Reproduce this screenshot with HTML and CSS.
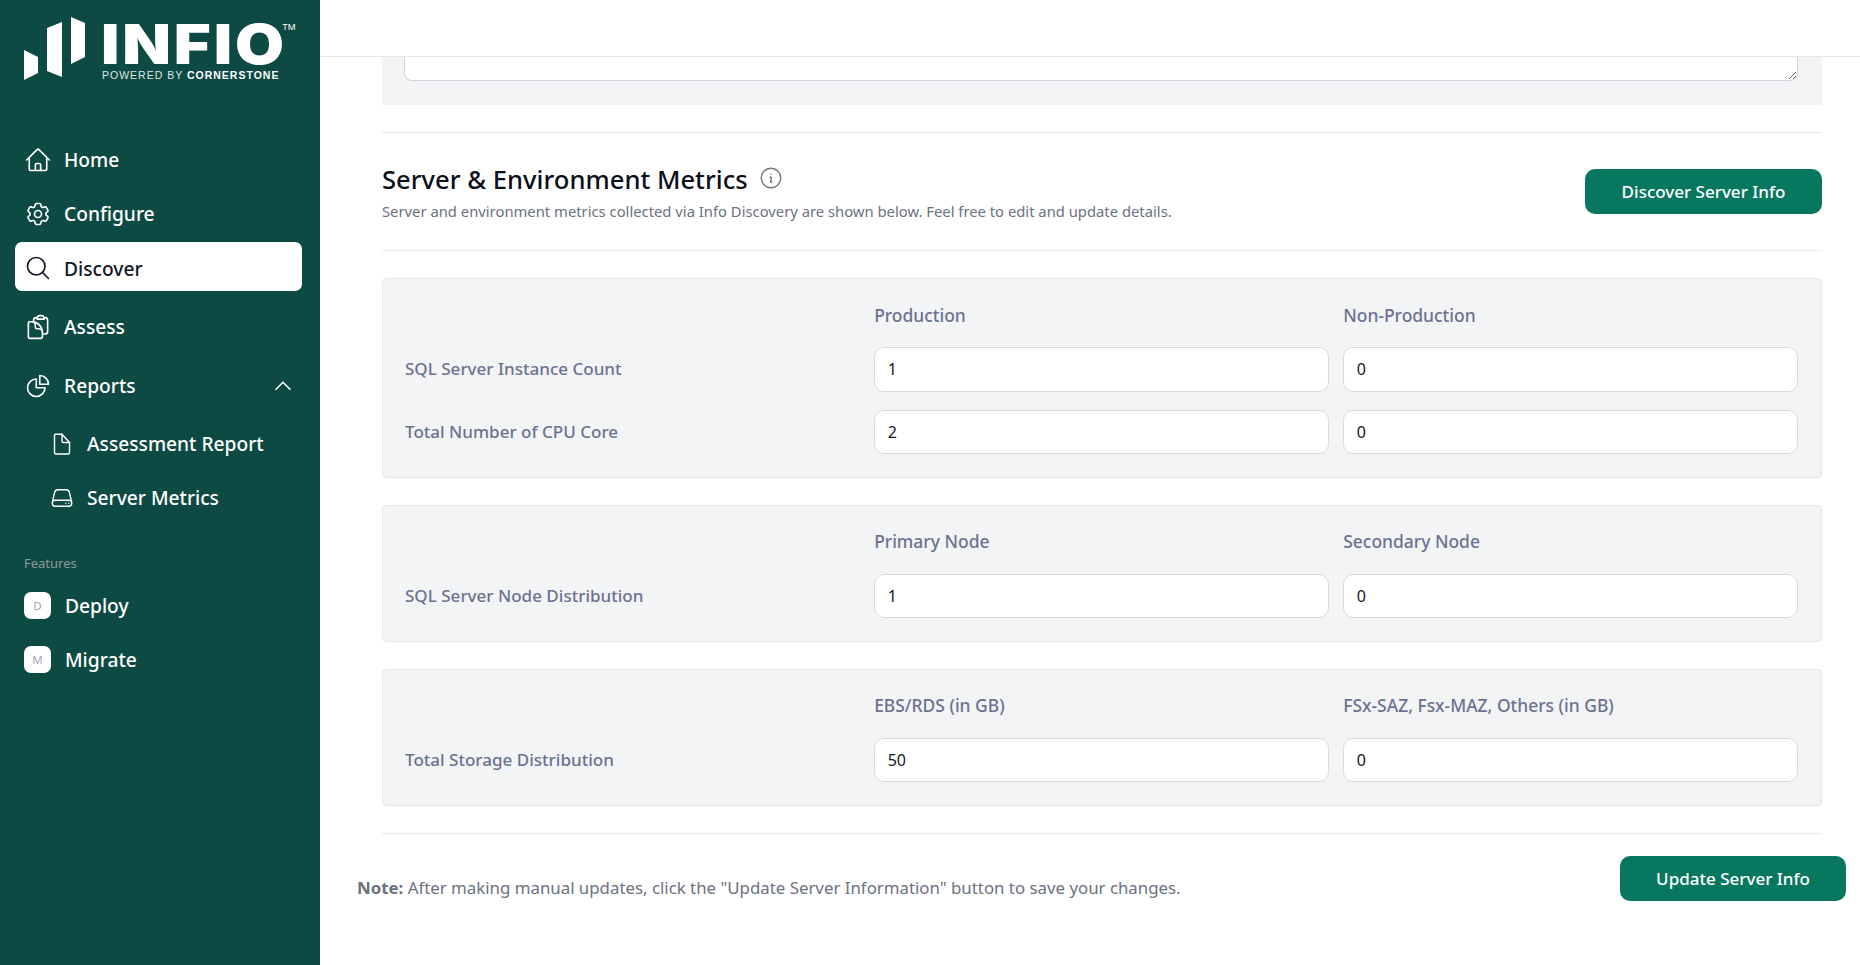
FILE: index.html
```html
<!DOCTYPE html>
<html>
<head>
  <meta charset="utf-8">
  <title>Server Metrics</title>
  <link rel="stylesheet" href="styles.css">
</head>
<body>
<aside class="sidebar">
  <div class="logo">
    <svg class="logo-mark" width="62" height="64" viewBox="24 17 62 64" fill="#fff">
      <polygon points="24,50 38,57 38,73 24,80"/>
      <polygon points="47,28 62,22 62,77 47,71"/>
      <polygon points="71,17 85,23 85,57 71,64"/>
    </svg>
    <div class="logo-text">
      <div class="logo-name">INFIO<sup class="logo-tm">TM</sup></div>
      <div class="logo-sub">POWERED BY <b>CORNERSTONE</b></div>
    </div>
  </div>

  <nav class="nav">
    <a class="nav-item">
      <svg class="nav-icon" viewBox="0 0 24 24"><path d="M2.25 12l8.954-8.955c.44-.439 1.152-.439 1.591 0L21.75 12M4.5 9.75v10.125c0 .621.504 1.125 1.125 1.125H9.75v-4.875c0-.621.504-1.125 1.125-1.125h2.25c.621 0 1.125.504 1.125 1.125V21h4.125c.621 0 1.125-.504 1.125-1.125V9.75M8.25 21h8.25"/></svg>
      Home
    </a>
    <a class="nav-item nav-before-active">
      <svg class="nav-icon" viewBox="0 0 24 24"><path d="M9.594 3.94c.09-.542.56-.94 1.11-.94h2.593c.55 0 1.02.398 1.11.94l.213 1.281c.063.374.313.686.645.87.074.04.147.083.22.127.324.196.72.257 1.075.124l1.217-.456a1.125 1.125 0 011.37.49l1.296 2.247a1.125 1.125 0 01-.26 1.431l-1.003.827c-.293.24-.438.613-.431.992a6.759 6.759 0 010 .255c-.007.378.138.75.43.99l1.005.828c.424.35.534.954.26 1.43l-1.298 2.247a1.125 1.125 0 01-1.369.491l-1.217-.456c-.355-.133-.75-.072-1.076.124a6.57 6.57 0 01-.22.128c-.331.183-.581.495-.644.869l-.213 1.28c-.09.543-.56.941-1.11.941h-2.594c-.55 0-1.02-.398-1.11-.94l-.213-1.281c-.062-.374-.312-.686-.644-.87a6.52 6.52 0 01-.22-.127c-.325-.196-.72-.257-1.076-.124l-1.217.456a1.125 1.125 0 01-1.369-.49l-1.297-2.247a1.125 1.125 0 01.26-1.431l1.004-.827c.292-.24.437-.613.43-.992a6.932 6.932 0 010-.255c.007-.378-.138-.75-.43-.99l-1.004-.828a1.125 1.125 0 01-.26-1.43l1.297-2.247a1.125 1.125 0 011.37-.491l1.216.456c.356.133.751.072 1.076-.124.072-.044.146-.087.22-.128.332-.183.582-.495.644-.869l.214-1.281z"/><path d="M15 12a3 3 0 11-6 0 3 3 0 016 0z"/></svg>
      Configure
    </a>
    <a class="nav-item nav-active">
      <svg class="nav-icon" viewBox="0 0 24 24"><path d="M21 21l-5.197-5.197m0 0A7.5 7.5 0 105.196 5.196a7.5 7.5 0 0010.607 10.607z"/></svg>
      Discover
    </a>
    <a class="nav-item nav-spaced">
      <svg class="nav-icon" viewBox="0 0 24 24"><path d="M8.25 7.5V6.108c0-1.135.845-2.098 1.976-2.192.373-.03.748-.057 1.123-.08M15.75 18H18a2.25 2.25 0 002.25-2.25V6.108c0-1.135-.845-2.098-1.976-2.192a48.424 48.424 0 00-1.123-.08M15.75 18.75v-1.875a3.375 3.375 0 00-3.375-3.375h-1.5a1.125 1.125 0 01-1.125-1.125v-1.5A3.375 3.375 0 006.375 7.5H5.25m11.9-3.664A2.251 2.251 0 0015 2.25h-1.5a2.251 2.251 0 00-2.15 1.586m5.8 0c.065.21.1.433.1.664v.75h-6V4.5c0-.231.035-.454.1-.664M6.75 7.5H4.875c-.621 0-1.125.504-1.125 1.125v12c0 .621.504 1.125 1.125 1.125h9.75c.621 0 1.125-.504 1.125-1.125V16.5a9 9 0 00-9-9z"/></svg>
      Assess
    </a>
    <a class="nav-item nav-reports">
      <svg class="nav-icon" viewBox="0 0 24 24"><path d="M10.5 6a7.5 7.5 0 107.5 7.5h-7.5V6z"/><path d="M13.5 10.5H21A7.5 7.5 0 0013.5 3v7.5z"/></svg>
      Reports
      <svg class="nav-chevron" viewBox="0 0 24 24"><path d="M4.5 15.75l7.5-7.5 7.5 7.5"/></svg>
    </a>
    <a class="nav-item nav-sub">
      <svg class="sub-icon" viewBox="0 0 24 24"><path d="M19.5 21V10.5l-7.5-8.25H5.6c-.6 0-1.1.5-1.1 1.1v17.5c0 .6.5 1.1 1.1 1.1h12.8c.6 0 1.1-.5 1.1-1.1z"/><path d="M12 2.25V9c0 .8.7 1.5 1.5 1.5h6"/></svg>
      Assessment Report
    </a>
    <a class="nav-item nav-sub">
      <svg class="sub-icon" viewBox="0 0 24 24"><path d="M21.75 17.25v-.228a4.5 4.5 0 00-.12-1.03l-2.268-9.64a3.375 3.375 0 00-3.285-2.602H7.923a3.375 3.375 0 00-3.285 2.602l-2.268 9.64a4.5 4.5 0 00-.12 1.03v.228m19.5 0a3 3 0 01-3 3H5.25a3 3 0 01-3-3m19.5 0a3 3 0 00-3-3H5.25a3 3 0 00-3 3m16.5 0h.008v.008h-.008v-.008zm-3 0h.008v.008h-.008v-.008z"/></svg>
      Server Metrics
    </a>
    <div class="nav-label">Features</div>
    <a class="nav-item nav-feature">
      <span class="nav-badge">D</span>
      Deploy
    </a>
    <a class="nav-item nav-feature">
      <span class="nav-badge">M</span>
      Migrate
    </a>
  </nav>
</aside>

<div class="page">
  <header class="topbar"></header>
  <main class="content">
    <div class="notes-block">
      <textarea class="notes-input"></textarea>
    </div>
    <hr class="rule rule-top">

    <section class="section-head">
      <div>
        <h2 class="section-title">
          Server &amp; Environment Metrics
          <svg class="info-icon" viewBox="0 0 24 24"><path d="M11.25 11.25l.041-.02a.75.75 0 011.063.852l-.708 2.836a.75.75 0 001.063.853l.041-.021M21 12a9 9 0 11-18 0 9 9 0 0118 0zm-9-3.75h.008v.008H12V8.25z"/></svg>
        </h2>
        <p class="section-sub">Server and environment metrics collected via Info Discovery are shown below. Feel free to edit and update details.</p>
      </div>
      <button class="btn">Discover Server Info</button>
    </section>
    <hr class="rule">

    <div class="panel panel-first">
      <div></div>
      <div class="col-head">Production</div>
      <div class="col-head">Non-Production</div>
      <label class="row-label">SQL Server Instance Count</label>
      <input class="field" value="1">
      <input class="field" value="0">
      <label class="row-label">Total Number of CPU Core</label>
      <input class="field" value="2">
      <input class="field" value="0">
    </div>

    <div class="panel">
      <div></div>
      <div class="col-head">Primary Node</div>
      <div class="col-head">Secondary Node</div>
      <label class="row-label">SQL Server Node Distribution</label>
      <input class="field" value="1">
      <input class="field" value="0">
    </div>

    <div class="panel">
      <div></div>
      <div class="col-head">EBS/RDS (in GB)</div>
      <div class="col-head">FSx-SAZ, Fsx-MAZ, Others (in GB)</div>
      <label class="row-label">Total Storage Distribution</label>
      <input class="field" value="50">
      <input class="field" value="0">
    </div>

    <hr class="rule rule-bottom">
  </main>

  <footer class="footer-row">
    <p class="note"><b>Note:</b> After making manual updates, click the "Update Server Information" button to save your changes.</p>
    <button class="btn btn-update">Update Server Info</button>
  </footer>
</div>
</body>
</html>
```

FILE: styles.css
```css
* {
  box-sizing: border-box;
}

body {
  margin: 0;
  height: 965px;
  overflow: hidden;
  display: flex;
  background: #fff;
  font-family: "Noto Sans", "Open Sans", sans-serif;
  color: #111827;
}

/* sidebar */
.sidebar {
  width: 320px;
  flex-shrink: 0;
  background: #0d4a43;
  color: #fff;
}

.logo {
  display: flex;
  height: 135px;
  padding: 17px 0 0 24px;
}

.logo-mark {
  flex-shrink: 0;
}

.logo-text {
  margin-left: 15px;
  padding-top: 7px;
}

.logo-name {
  font-family: Inter, sans-serif;
  font-weight: 900;
  font-size: 55px;
  line-height: 40px;
  letter-spacing: 2.5px;
  transform: scaleX(1.15);
  transform-origin: left;
}

.logo-tm {
  margin-left: -4px;
  font-size: 7.5px;
  font-weight: 400;
  line-height: 0;
  vertical-align: 34px;
  letter-spacing: 0;
}

.logo-sub {
  margin-top: 6px;
  margin-left: 1px;
  font-family: "Liberation Sans", sans-serif;
  font-size: 10.5px;
  line-height: 10px;
  letter-spacing: 1px;
  color: #dfe8e6;
}

.logo-sub b {
  color: #fff;
}

.nav {
  display: flex;
  flex-direction: column;
  padding: 0 18px 0 15px;
}

.nav-item {
  display: flex;
  align-items: center;
  height: 49px;
  margin-bottom: 5px;
  padding-left: 9px;
  font-size: 19.2px;
  font-weight: 500;
}

.nav-before-active {
  margin-bottom: 4px;
}

.nav-active {
  margin-bottom: 11px;
  padding-top: 3px;
  background: #fff;
  border-radius: 7px;
  color: #111827;
}

.nav-spaced {
  margin-bottom: 10px;
}

.nav-reports {
  margin-bottom: 9px;
}

.nav-icon {
  width: 28px;
  height: 28px;
  margin-right: 12px;
  fill: none;
  stroke: currentColor;
  stroke-width: 1.4;
  stroke-linecap: round;
  stroke-linejoin: round;
}

.nav-chevron {
  width: 24px;
  height: 24px;
  margin-left: auto;
  margin-right: 7px;
  fill: none;
  stroke: currentColor;
  stroke-width: 1.5;
}

.nav-sub {
  padding-left: 35px;
}

.sub-icon {
  width: 24px;
  height: 24px;
  margin-right: 13px;
  fill: none;
  stroke: currentColor;
  stroke-width: 1.4;
  stroke-linecap: round;
  stroke-linejoin: round;
}

.nav-label {
  margin: 26.5px 0 9.5px 9px;
  font-size: 13px;
  line-height: 18px;
  color: #8a9a9c;
}

.nav-feature {
  padding-left: 9px;
}

.nav-badge {
  display: flex;
  align-items: center;
  justify-content: center;
  width: 27px;
  height: 27px;
  margin-right: 14px;
  background: #fff;
  border-radius: 7px;
  font-size: 11.5px;
  font-weight: 400;
  color: #a0a6b8;
}

/* main column */
.page {
  flex: 1;
  min-width: 0;
}

.topbar {
  height: 57px;
  background: #fff;
  border-bottom: 1px solid #e5e7eb;
}

.content {
  padding: 0 38px 0 62px;
}

.notes-block {
  height: 48px;
  padding: 0 24px 0 22px;
  background: #f3f4f6;
}

.notes-input {
  display: block;
  width: 100%;
  height: 24px;
  min-height: 24px;
  padding: 0;
  border: 1px solid #d1d5db;
  border-top: none;
  border-radius: 0 0 8px 8px;
  background: #fff;
  resize: vertical;
  outline: none;
}

.rule {
  margin: 0;
  border: none;
  border-top: 1px solid #e9eaee;
}

.rule-top {
  margin-top: 27px;
}

.rule-bottom {
  margin-top: 27px;
}

.section-head {
  display: flex;
  align-items: center;
  justify-content: space-between;
  height: 117px;
}

.section-title {
  display: flex;
  align-items: center;
  margin: 0;
  font-size: 25.6px;
  font-weight: 500;
  line-height: 36px;
  color: #0b0f19;
}

.info-icon {
  width: 26px;
  height: 26px;
  margin-left: 10px;
  margin-top: -4px;
  fill: none;
  stroke: #777;
  stroke-width: 1.3;
  stroke-linecap: round;
  stroke-linejoin: round;
}

.section-sub {
  margin: 3px 0 1px;
  font-size: 14.8px;
  line-height: 20px;
  color: #6b7280;
}

.btn {
  height: 45px;
  width: 237px;
  border: none;
  border-radius: 10px;
  background: #07785f;
  color: #fff;
  font-family: inherit;
  font-size: 17px;
  font-weight: 500;
}

.panel {
  display: grid;
  grid-template-columns: repeat(3, 1fr);
  grid-template-rows: 27px;
  grid-auto-rows: 44.5px;
  column-gap: 14.4px;
  row-gap: 18px;
  align-items: center;
  margin-top: 26.5px;
  padding: 23px 23px 23px 22px;
  background: #f3f4f6;
  border: 1px solid #e5e7eb;
  border-radius: 4px;
}

.panel-first {
  margin-top: 27px;
}

.col-head {
  padding-bottom: 2px;
  font-size: 17.45px;
  font-weight: 500;
  color: #6b7290;
}

.row-label {
  padding-bottom: 1px;
  font-size: 17.05px;
  font-weight: 500;
  color: #6b7290;
}

.field {
  width: 100%;
  height: 100%;
  padding: 0 12.5px;
  background: #fff;
  border: 1px solid #d8dade;
  border-radius: 10px;
  font-family: inherit;
  font-size: 16px;
  color: #111827;
  outline: none;
}

.footer-row {
  display: flex;
  align-items: flex-start;
  justify-content: space-between;
  padding: 22px 14px 0 37px;
}

.note {
  margin: 0;
  padding-top: 20px;
  font-size: 16.83px;
  line-height: 24px;
  color: #6b7280;
}

.btn-update {
  width: 226px;
}
```
